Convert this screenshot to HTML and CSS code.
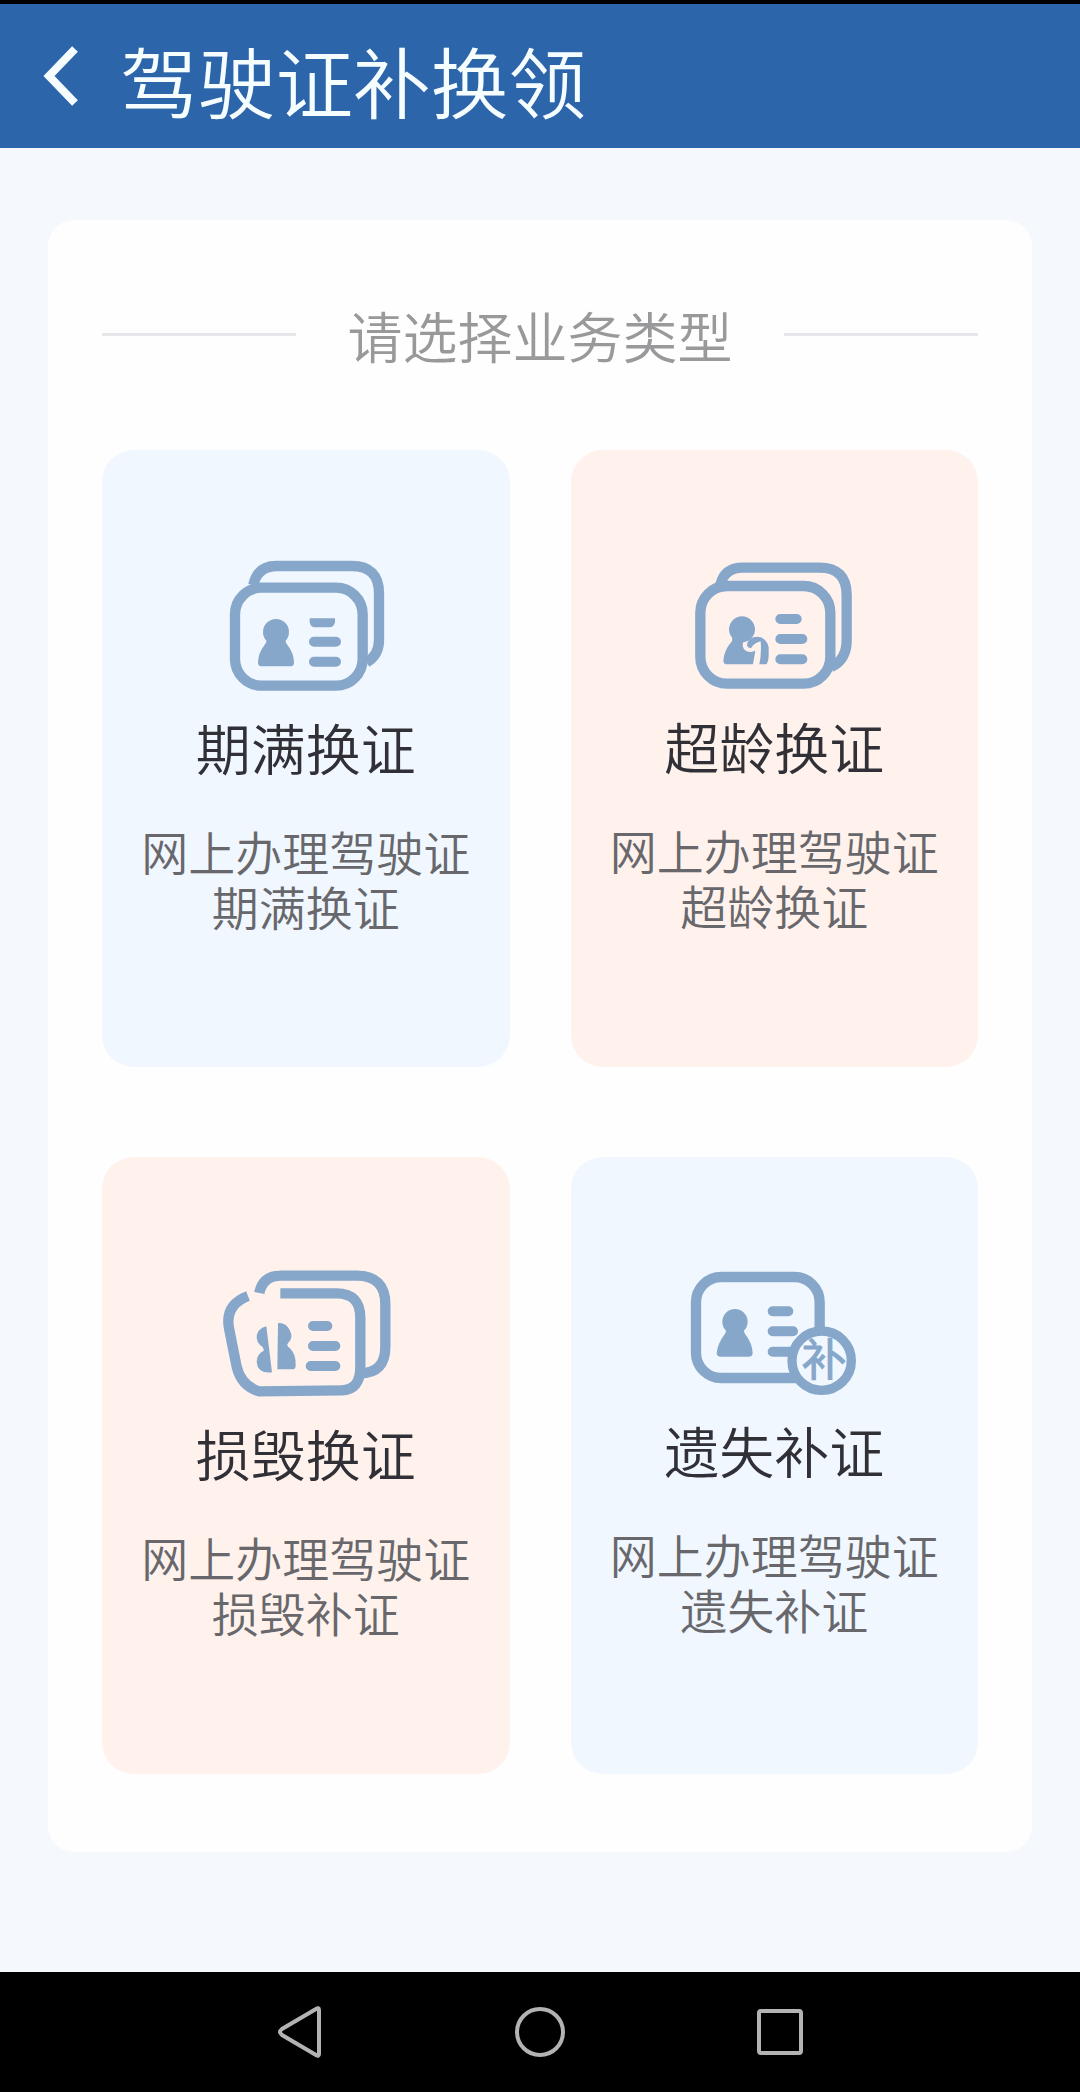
FILE: index.html
```html
<!DOCTYPE html>
<html lang="zh">
<head>
    <meta charset="UTF-8">
    <meta name="viewport" content="width=device-width, initial-scale=1.0">
    <title>驾驶证补换领</title>
    <link rel="stylesheet" href="styles.css">
</head>
<body>

    <header class="header">
        <svg class="back" viewBox="0 0 36 60">
            <path d="M32 3 L6 30 L32 57"/>
        </svg>
        <h1>驾驶证补换领</h1>
    </header>

    <main class="content">
        <div class="panel">
            <div class="panel-title">
                <h2>请选择业务类型</h2>
            </div>

            <div class="grid">
                <!-- 期满换证 -->
                <a class="tile blue">
                    <svg class="icon" viewBox="-12 0 600 510">
                        <path class="line" d="M130 135 Q142 78 200 78 H425 Q507 78 507 160 V300 Q507 345 470 367"/>
                        <rect class="line" x="75" y="143" width="383" height="294" rx="80"/>
                        <circle class="fill" cx="198" cy="276" r="39"/>
                        <path class="fill" d="M170 290 H226 Q224 306 232 314 Q252 340 252 368 Q252 379 240 379 H156 Q144 379 144 368 Q144 340 164 314 Q172 306 170 290Z"/>
                        <path class="fill" d="M299 235 H375 V246 Q372 262 358 262 H315 Q301 262 299 246Z"/>
                        <path class="bar" d="M312 305 H378 M312 365 H378"/>
                    </svg>
                    <h3>期满换证</h3>
                    <p>网上办理驾驶证<br>期满换证</p>
                </a>

                <!-- 超龄换证 -->
                <a class="tile pink tile-b">
                    <svg class="icon" viewBox="-16 0 600 510">
                        <path class="line" d="M123 134 Q136 83 190 83 H420 Q502 83 502 165 V300 Q502 360 455 381"/>
                        <rect class="line" x="63" y="138" width="390" height="293" rx="80"/>
                        <circle class="fill" cx="188" cy="268" r="39"/>
                        <path class="fill" d="M160 284 H214 Q188 300 190 318 Q194 336 216 336 L228 332 L221 373 H144 Q132 373 132 362 Q134 330 158 304Z"/>
                        <path class="fill" d="M203 316 C206 282 262 280 268 322 V348 Q267 366 261 373 H240 Q247 340 244 304 Q226 308 216 323 Q206 326 203 316Z"/>
                        <path class="bar" d="M303 237 H352 M303 297 H369 M303 358 H369"/>
                    </svg>
                    <h3>超龄换证</h3>
                    <p>网上办理驾驶证<br>超龄换证</p>
                </a>

                <!-- 损毁换证 -->
                <a class="tile pink tile-c">
                    <svg class="icon" viewBox="-12 -9 600 510">
                        <path class="line" d="M148 129 Q158 77 214 77 H440 Q526 77 526 163 V290 Q526 370 450 370"/>
                        <path class="line" d="M211 130 H380 Q451 130 451 204 V350 Q451 420 395 421 L148 424 Q94 408 80 350 L57 235 Q44 165 114 138"/>
                        <path class="fill" d="M169 229 L186 367 Q143 372 140 336 Q140 312 161 302 Q162 292 150 285 Q132 265 146 242 Q156 231 169 229Z"/>
                        <path class="fill" d="M204 219 Q228 217 239 240 Q252 264 234 280 Q228 286 239 294 Q259 312 257 347 Q257 358 246 358 H202Z"/>
                        <path class="bar" d="M309 228 H352 M309 288 H376 M302 348 H376"/>
                    </svg>
                    <h3>损毁换证</h3>
                    <p>网上办理驾驶证<br>损毁补证</p>
                </a>

                <!-- 遗失补证 -->
                <a class="tile blue tile-d">
                    <svg class="icon" viewBox="-18 -9 600 510">
                        <rect class="line" x="48" y="81" width="371" height="303" rx="76"/>
                        <circle class="fill" cx="165" cy="215" r="38"/>
                        <path class="fill" d="M138 230 H192 Q190 246 198 256 Q216 280 218 308 Q218 320 206 320 H122 Q110 320 110 308 Q114 280 132 256 Q140 246 138 230Z"/>
                        <path class="bar" d="M278 184 H325 M278 244 H339 M278 305 H339"/>
                        <circle class="badge" cx="425" cy="332" r="89"/>
                        <text class="badge-text" x="432" y="378">补</text>
                    </svg>
                    <h3>遗失补证</h3>
                    <p>网上办理驾驶证<br>遗失补证</p>
                </a>
            </div>
        </div>
    </main>

    <nav class="navbar">
        <svg viewBox="0 0 60 60">
            <path d="M49 8 V52 Q49 55 46 53 L12 33 Q8 30 12 27 L46 7 Q49 5 49 8Z"/>
        </svg>
        <svg viewBox="0 0 60 60">
            <circle cx="30" cy="30" r="23"/>
        </svg>
        <svg viewBox="0 0 60 60">
            <rect x="9" y="9" width="42" height="42" rx="2"/>
        </svg>
    </nav>

</body>
</html>
```

FILE: styles.css
```css
* {
    box-sizing: border-box;
}

body {
    margin: 0;
    min-height: 2092px;
    display: flex;
    flex-direction: column;
    font-family: "Noto Sans CJK SC", sans-serif;
    background: #f5f8fd;
}

h1, h2, h3, p {
    margin: 0;
    font-weight: 350;
}

.header {
    height: 148px;
    display: flex;
    align-items: center;
    padding: 6px 43px 0;
    border-top: 4px solid #000;
    background: #2d65ab;
    color: #f5fdff;
}

.back {
    width: 36px;
    height: 60px;
    margin-bottom: 6px;
    fill: none;
    stroke: #f5fdff;
    stroke-width: 8;
}

.header h1 {
    margin-left: 41px;
    font-size: 77.7px;
    line-height: 100px;
}

.content {
    flex: 1;
    padding: 72px 48px 0;
}

.panel {
    height: 1632px;
    padding: 79px 54px 0;
    border-radius: 26px;
    background: #fefefe;
}

.panel-title {
    display: flex;
    align-items: center;
    justify-content: space-between;
    height: 70px;
}

.panel-title h2 {
    font-size: 55px;
    line-height: 70px;
    color: #99999b;
}

/* 标题两侧的横线 */
.panel-title::before,
.panel-title::after {
    content: "";
    width: 194px;
    height: 3px;
    margin-top: 1px;
    background: #e4e6e9;
}

.grid {
    display: grid;
    grid-template-columns: 1fr 1fr;
    gap: 90px 61px;
    margin-top: 81px;
}

.tile {
    height: 617px;
    padding-top: 90px;
    display: flex;
    flex-direction: column;
    align-items: center;
    border-radius: 32px;
    text-align: center;
}

.blue {
    background: #f1f7fe;
}

.pink {
    background: #fff2ed;
}

.tile h3 {
    margin-top: 1px;
    font-size: 55px;
    line-height: 70px;
    color: #303036;
}

.tile p {
    margin-top: 42px;
    font-size: 47px;
    line-height: 55px;
    color: #68686c;
}

.tile-b h3 {
    margin-top: 0;
}

.tile-c h3 {
    margin-top: 0;
}

.tile-d h3 {
    margin-top: -3px;
}

.icon {
    width: 200px;
    height: 170px;
}

.icon .line {
    fill: none;
    stroke: #86a7ca;
    stroke-width: 31;
}

.icon .fill {
    fill: #86a7ca;
}

.icon .bar {
    fill: none;
    stroke: #86a7ca;
    stroke-width: 30;
    stroke-linecap: round;
}

.icon .badge {
    fill: #f1f7fe;
    stroke: #86a7ca;
    stroke-width: 28;
}

.icon .badge-text {
    font-size: 134px;
    text-anchor: middle;
    fill: #86a7ca;
    stroke: #86a7ca;
    stroke-width: 3;
}

.navbar {
    height: 120px;
    display: flex;
    align-items: center;
    justify-content: center;
    gap: 180px;
    background: #000;
}

.navbar svg {
    width: 60px;
    height: 60px;
    fill: none;
    stroke: #b4b2b4;
    stroke-width: 4;
}
```
